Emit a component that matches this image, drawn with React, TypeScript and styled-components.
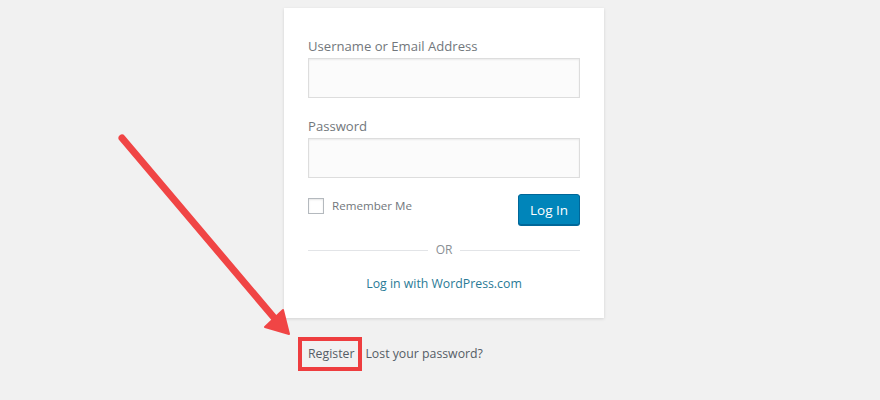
import React from "react";
import styled, { createGlobalStyle } from "styled-components";

const Global = createGlobalStyle`
  html, body { margin: 0; padding: 0; background: #f1f1f1; }
  body { font-family: "Open Sans", "Noto Sans", Arial, sans-serif; }
  * { box-sizing: border-box; }
`;

const Page = styled.div`
  position: relative;
  width: 880px;
  height: 400px;
  overflow: hidden;
  background: #f1f1f1;
  padding: 8px 0 0 284px;
`;

const Card = styled.form`
  width: 320px;
  background: #fff;
  box-shadow: 0 1px 3px rgba(0, 0, 0, 0.13);
  padding: 28px 24px 24px;
  display: flex;
  flex-direction: column;
`;

const Label = styled.label`
  font-size: 13.1px;
  line-height: 20px;
  color: #72777c;
  margin-bottom: 2px;
`;

const Input = styled.input`
  width: 272px;
  height: 40px;
  border: 1px solid #ddd;
  background: #fbfbfb;
  box-shadow: inset 0 1px 2px rgba(0, 0, 0, 0.07);
  margin: 0 0 18px;
  outline: none;
  &:last-of-type { margin-bottom: 16px; }
`;

const Row = styled.div`
  display: flex;
  justify-content: space-between;
  align-items: flex-start;
`;

const Remember = styled.label`
  display: flex;
  align-items: center;
  gap: 8px;
  margin-top: 3px;
  font-size: 11.6px;
  line-height: 17px;
  color: #72777c;
`;

const Box = styled.span`
  width: 16px;
  height: 16px;
  border: 1px solid #b4b9be;
  background: #fff;
  box-shadow: inset 0 1px 2px rgba(0, 0, 0, 0.1);
`;

const Button = styled.button`
  width: 62px;
  height: 31px;
  padding: 0;
  border: 1px solid #006799;
  border-radius: 3px;
  background: #0085ba;
  box-shadow: 0 1px 0 #006799;
  color: #fff;
  font-family: inherit;
  font-size: 13.5px;
  line-height: 28px;
`;

const Divider = styled.div`
  display: flex;
  align-items: center;
  gap: 8px;
  margin-top: 15px;
  font-size: 12px;
  line-height: 20px;
  color: #8a8f94;
  &::before, &::after {
    content: "";
    flex: 1;
    height: 1px;
    background: #e2e4e7;
  }
`;

const WpLink = styled.a`
  display: block;
  margin-top: 14px;
  text-align: center;
  font-size: 12.3px;
  line-height: 20px;
  color: #2a7a96;
  text-decoration: none;
`;

const Nav = styled.p`
  margin: 19px 0 0 24px;
  display: flex;
  align-items: center;
  gap: 3px;
  font-size: 12.3px;
  line-height: 26px;
  color: #555d66;
`;

const Highlight = styled.span`
  display: inline-block;
  border: 4px solid #ee3d3f;
  padding: 0 4px 0 6px;
  margin-left: -10px;
  color: #555d66;
`;

const Arrow = styled.svg`
  position: absolute;
  left: 0;
  top: 0;
  pointer-events: none;
`;

export default function App() {
  return (
    <>
      <Global />
      <Page>
        <Card onSubmit={(e) => e.preventDefault()}>
          <Label>Username or Email Address</Label>
          <Input type="text" />
          <Label>Password</Label>
          <Input type="password" />
          <Row>
            <Remember>
              <Box />
              Remember Me
            </Remember>
            <Button type="submit">Log In</Button>
          </Row>
          <Divider>OR</Divider>
          <WpLink href="#">Log in with WordPress.com</WpLink>
        </Card>
        <Nav>
          <Highlight>Register</Highlight>
          <span>Lost your password?</span>
        </Nav>
        <Arrow width="880" height="400" viewBox="0 0 880 400">
          <line x1="122" y1="138" x2="276" y2="320" stroke="#f04545" strokeWidth="7" strokeLinecap="round" />
          <polygon points="289,334 265,327 283,310" fill="#f04545" stroke="#f04545" strokeWidth="2" strokeLinejoin="round" />
        </Arrow>
      </Page>
    </>
  );
}
